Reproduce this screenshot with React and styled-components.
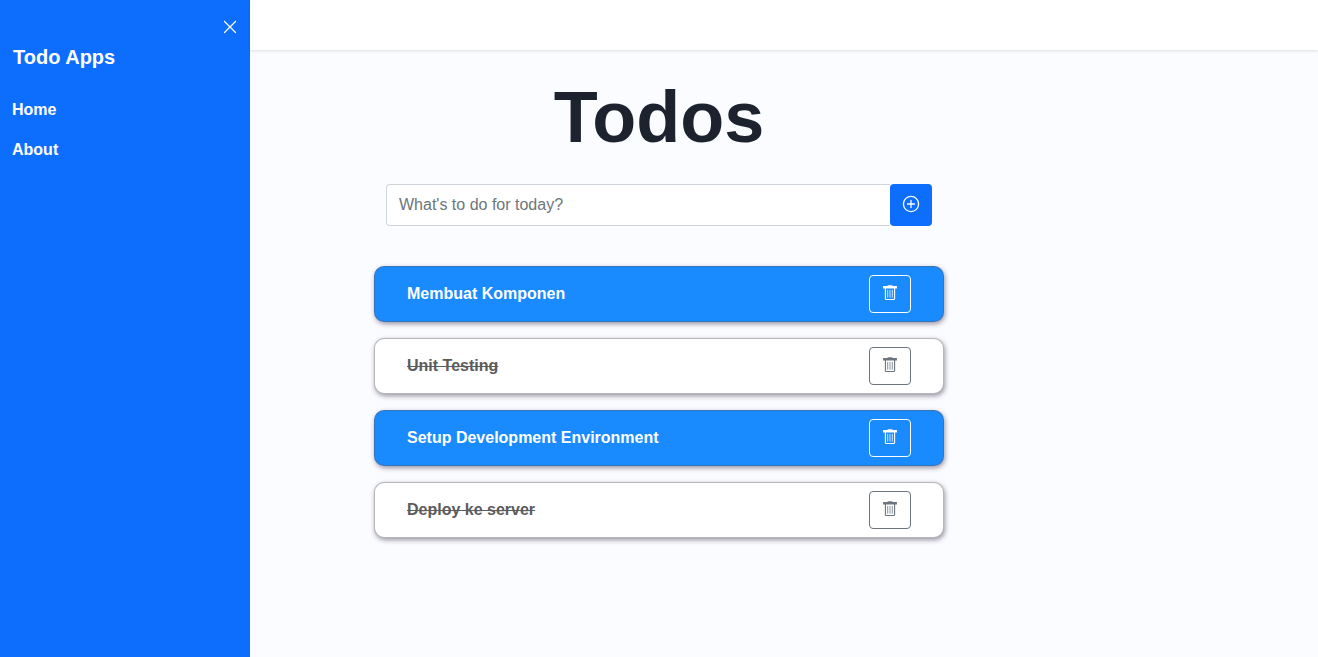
import React from "react";
import styled, { createGlobalStyle } from "styled-components";

const GlobalStyle = createGlobalStyle`
  *, *::before, *::after { box-sizing: border-box; }
  body {
    margin: 0;
    background: #fbfcff;
    color: #212529;
    font: 400 16px/24px "Liberation Sans", Arial, sans-serif;
  }
`;

const Page = styled.div`
  display: grid;
  grid-template-columns: 250px 1fr;
  min-height: 100vh;
`;

const Sidebar = styled.aside`
  background: #0d6efd;
  color: #fff;
`;

const CloseRow = styled.div`
  display: flex;
  justify-content: flex-end;
  padding: 17px 10px 0 0;
`;

const CloseButton = styled.button`
  display: flex;
  padding: 0;
  border: 0;
  background: none;
  color: #fff;
  cursor: pointer;
`;

const Brand = styled.h2`
  margin: 8px 0 0;
  padding: 0 13px;
  font-size: 20px;
  line-height: 24px;
`;

const NavList = styled.nav`
  display: flex;
  flex-direction: column;
  margin-top: 21px;
`;

const NavLink = styled.a`
  padding: 8px 12px;
  color: #fff;
  font-weight: 700;
  text-decoration: none;
`;

const Content = styled.div`
  display: flex;
  flex-direction: column;
`;

const TopBar = styled.header`
  height: 50px;
  background: #fff;
  box-shadow: 0 1px 3px rgba(0, 0, 0, 0.12);
`;

const Main = styled.main`
  padding: 24px 250px 40px 0;
`;

const Column = styled.div`
  width: 100%;
  max-width: 570px;
  margin: 0 auto;
`;

const Title = styled.h1`
  margin: 0 0 24px;
  color: #1c232e;
  font-size: 72px;
  line-height: 86px;
  text-align: center;
`;

const TodoForm = styled.form`
  display: flex;
  height: 42px;
  margin: 0 12px 40px;
`;

const TodoInput = styled.input`
  flex: 1;
  min-width: 0;
  padding: 0 12px;
  border: 1px solid #ced4da;
  border-right: 0;
  border-radius: 4px 0 0 4px;
  background: #fff;
  color: #212529;
  font: inherit;

  &::placeholder {
    color: #6c757d;
    opacity: 1;
  }
`;

const AddButton = styled.button`
  display: flex;
  align-items: center;
  justify-content: center;
  width: 42px;
  padding: 0 0 2px;
  border: 0;
  border-radius: 4px;
  background: #0d6efd;
  color: #fff;
  cursor: pointer;
`;

const TodoList = styled.ul`
  display: flex;
  flex-direction: column;
  gap: 16px;
  margin: 0;
  padding: 0;
  list-style: none;
`;

const TodoCard = styled.li`
  display: flex;
  align-items: center;
  justify-content: space-between;
  height: 56px;
  padding: 0 32px;
  border: 1px solid rgba(92, 92, 104, 0.45);
  border-radius: 10px;
  background: ${({ $done }) => ($done ? "#fff" : "#198bff")};
  color: ${({ $done }) => ($done ? "#5c5c5c" : "#fff")};
  box-shadow: 1px 2px 5px rgba(30, 20, 50, 0.45);
`;

const TodoText = styled.span`
  font-weight: 700;
  text-decoration: ${({ $done }) => ($done ? "line-through" : "none")};
`;

const DeleteButton = styled.button`
  display: flex;
  align-items: center;
  justify-content: center;
  width: 42px;
  height: 38px;
  padding: 0 0 2px;
  border: 1px solid ${({ $done }) => ($done ? "#6c757d" : "#fff")};
  border-radius: 4px;
  background: none;
  color: ${({ $done }) => ($done ? "#6c757d" : "#fff")};
  cursor: pointer;
`;

const CloseIcon = () => (
  <svg width="20" height="20" viewBox="0 0 20 20" fill="none" stroke="currentColor" strokeWidth="1.2" strokeLinecap="round" aria-hidden="true">
    <path d="M4.5 4.5 15.5 15.5M15.5 4.5 4.5 15.5" />
  </svg>
);

const PlusIcon = () => (
  <svg width="18" height="18" viewBox="0 0 18 18" fill="none" stroke="currentColor" strokeWidth="1.3" strokeLinecap="round" aria-hidden="true">
    <circle cx="9" cy="9" r="7.6" />
    <path d="M9 5.5v7M5.5 9h7" />
  </svg>
);

const TrashIcon = () => (
  <svg width="16" height="16" viewBox="0 0 16 16" fill="none" stroke="currentColor" aria-hidden="true">
    <path fill="currentColor" stroke="none" d="M6 .2h4l.8.8h3.700a.5.5 0 0 1 .5.5V2.900a.5.5 0 0 1-.5.5h-13a.5.5 0 0 1-.5-.5V1.500a.5.5 0 0 1 .5-.5h3.700z" />
    <path strokeWidth="1.1" d="M3.400 3v10.500a1 1 0 0 0 1 1h7.200a1 1 0 0 0 1-1V3" />
    <path strokeWidth="0.8" strokeLinecap="round" d="M5.700 5.300v7M8 5.300v7M10.300 5.300v7" />
  </svg>
);

const todos = [
  { text: "Membuat Komponen", done: false },
  { text: "Unit Testing", done: true },
  { text: "Setup Development Environment", done: false },
  { text: "Deploy ke server", done: true },
];

export default function App() {
  return (
    <>
      <GlobalStyle />
      <Page>
        <Sidebar>
          <CloseRow>
            <CloseButton type="button" aria-label="Close menu">
              <CloseIcon />
            </CloseButton>
          </CloseRow>
          <Brand>Todo Apps</Brand>
          <NavList>
            <NavLink href="#home">Home</NavLink>
            <NavLink href="#about">About</NavLink>
          </NavList>
        </Sidebar>
        <Content>
          <TopBar />
          <Main>
            <Column>
              <Title>Todos</Title>
              <TodoForm onSubmit={(e) => e.preventDefault()}>
                <TodoInput type="text" aria-label="New todo" placeholder="What's to do for today?" />
                <AddButton type="submit" aria-label="Add todo">
                  <PlusIcon />
                </AddButton>
              </TodoForm>
              <TodoList>
                {todos.map(({ text, done }) => (
                  <TodoCard key={text} $done={done}>
                    <TodoText $done={done}>{text}</TodoText>
                    <DeleteButton type="button" $done={done} aria-label={`Delete ${text}`}>
                      <TrashIcon />
                    </DeleteButton>
                  </TodoCard>
                ))}
              </TodoList>
            </Column>
          </Main>
        </Content>
      </Page>
    </>
  );
}
